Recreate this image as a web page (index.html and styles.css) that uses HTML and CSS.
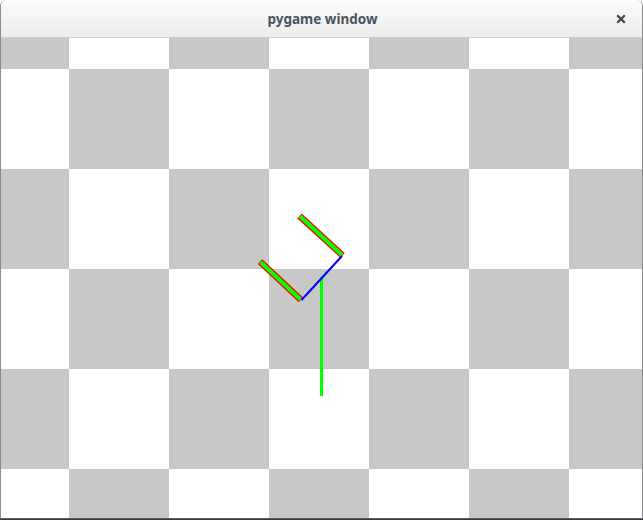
FILE: index.html
```html
<!DOCTYPE html>
<html>
<head>
<meta charset="utf-8">
<title>pygame window</title>
<link rel="stylesheet" href="styles.css">
</head>
<body>
<div class="window">
  <div class="titlebar">
    <span class="title">pygame window</span>
    <svg class="close" width="10" height="10" viewBox="0 0 10 10">
      <path d="M1.2 1.2 L8.8 8.8 M8.8 1.2 L1.2 8.8" stroke="#3c4a55" stroke-width="2.3" stroke-linecap="butt"/>
    </svg>
  </div>
  <div class="canvas">
    <svg class="scene" width="641" height="480" viewBox="0 0 641 480">
      <line x1="298.5" y1="178" x2="341.5" y2="217.3" stroke="#ff0000" stroke-width="6.5"/>
      <line x1="299" y1="178.3" x2="341" y2="217" stroke="#00ff00" stroke-width="4"/>
      <line x1="259" y1="223.6" x2="300" y2="261.8" stroke="#ff0000" stroke-width="6.5"/>
      <line x1="259.5" y1="224" x2="299.5" y2="261.5" stroke="#00ff00" stroke-width="4"/>
      <rect x="319" y="239" width="3" height="119" fill="#00ff00"/>
      <line x1="300.5" y1="262" x2="341" y2="218" stroke="#0000ff" stroke-width="2"/>
    </svg>
  </div>
</div>
<div class="desktop"></div>
</body>
</html>
```
FILE: styles.css
```css
html, body {
  margin: 0;
  padding: 0;
}
body {
  width: 643px;
  height: 520px;
  overflow: hidden;
  background: #ffffff;
  display: flex;
  flex-direction: column;
}
.window {
  width: 641px;
  border-left: 1px solid #8c8c8c;
  border-right: 1px solid #8c8c8c;
  border-bottom: 1px solid #5a5a5a;
  border-radius: 6px 6px 0 0;
  overflow: hidden;
  display: flex;
  flex-direction: column;
}
.titlebar {
  height: 37px;
  border-bottom: 1px solid #cfcfcf;
  background: linear-gradient(#fbfbfb, #ececec);
  display: flex;
  align-items: center;
  justify-content: center;
  position: relative;
}
.title {
  font-family: "Noto Sans", "DejaVu Sans", sans-serif;
  font-weight: 700;
  font-size: 13.5px;
  color: #4a555e;
  margin-top: 1px;
  margin-left: 2px;
}
.close {
  position: absolute;
  right: 16px;
  top: 14px;
}
.canvas {
  height: 480px;
  position: relative;
  background-color: #ffffff;
  background-image: repeating-conic-gradient(#c8c8c8 0 25%, #ffffff 0 50%);
  background-size: 200px 200px;
  background-position: 68px 131px;
}
.scene {
  position: absolute;
  left: 0;
  top: 0;
}
.desktop {
  flex: 1;
  background: #3a3d42;
}
```
